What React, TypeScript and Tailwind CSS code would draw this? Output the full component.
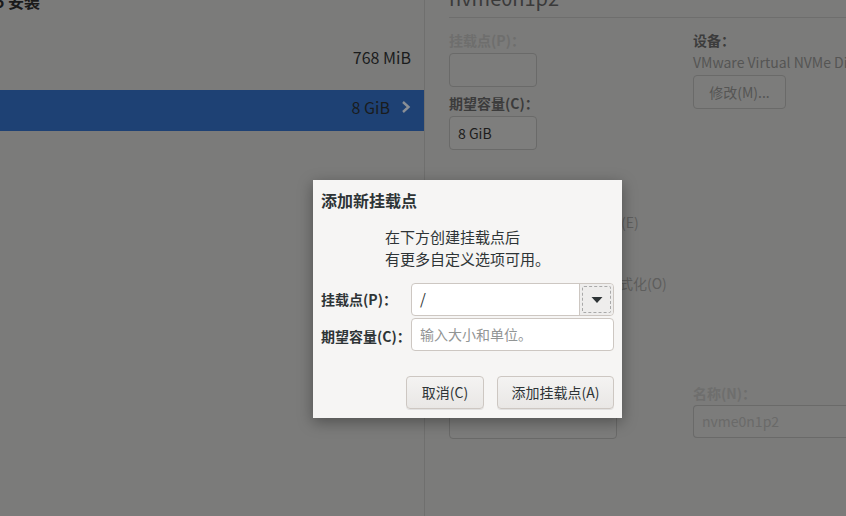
export default function App() {
  return (
    <div className="relative w-[846px] h-[516px] overflow-hidden bg-[#7b7b7a] flex font-['Noto_Sans_CJK_SC','Noto_Sans',sans-serif] text-[#1a1c1d]">
      {/* Left: partition list (dimmed) */}
      <div className="w-[425px] shrink-0 border-r border-[#6f6f6e] flex flex-col">
        <div className="-mt-[9px] -ml-[5px] text-[16px] leading-[20px] font-bold text-[#1a1a1a]">5 安装</div>
        <div className="mt-[25px] h-[41px] flex items-center justify-end pr-[13px] text-[16px]">768 MiB</div>
        <div className="mt-[13px] h-[41px] bg-[#1e4174] flex items-center justify-end pr-[12px] pb-[8px] text-[16px]">
          <span>8 GiB</span>
          <svg width="12" height="14" viewBox="0 0 12 14" className="ml-[10px]">
            <path d="M3 2 L8.5 7 L3 12" fill="none" stroke="#8a8f96" strokeWidth="2.4" />
          </svg>
        </div>
      </div>

      {/* Right: partition details (dimmed) */}
      <div className="flex-1 pl-[24px] flex flex-col">
        <div className="h-[18px] border-b border-[#6e6e6d] overflow-hidden">
          <div className="-mt-[14px] text-[20px] leading-[24px] text-[#3a3a3a]">nvme0n1p2</div>
        </div>
        <div className="flex">
          <div className="w-[244px] flex flex-col">
            <div className="mt-[13px] text-[14px] leading-[18px] font-bold text-[#6e6e6d]">挂载点(P)：</div>
            <div className="mt-[4px] w-[88px] h-[34px] rounded-[4px] border border-[#6a6a69] bg-[#7c7c7b]" />
            <div className="mt-[7px] text-[14px] leading-[18px] font-bold text-[#3c3c3c]">期望容量(C)：</div>
            <div className="mt-[4px] w-[88px] h-[34px] rounded-[4px] border border-[#6a6a69] bg-[#7e7e7d] flex items-center pl-[8px] text-[14px] text-[#1c1c1c]">8 GiB</div>
            <div className="mt-[62px] flex items-center pl-[124px] text-[14px] text-[#5e5e5d]">
              <span className="w-[14px] h-[14px] rounded-[3px] border border-[#6a6a69] mr-[6px]" />
              <span>加密(E)</span>
            </div>
            <div className="mt-[40px] flex items-center pl-[108px] text-[14px] text-[#5e5e5d]">
              <span className="w-[14px] h-[14px] rounded-[3px] border border-[#6a6a69] mr-[6px]" />
              <span>重新格式化(O)</span>
            </div>
            <div className="mt-[112px] w-[168px] h-[33px] rounded-[4px] border border-[#6a6a69] bg-[#7c7c7b]" />
          </div>
          <div className="flex-1 flex flex-col">
            <div className="mt-[13px] text-[14px] leading-[18px] font-bold text-[#3c3c3c]">设备：</div>
            <div className="mt-[4px] text-[14px] leading-[18px] whitespace-nowrap text-[#555554]">VMware Virtual NVMe Disk (nvme0n1)</div>
            <div className="mt-[4px] w-[93px] h-[34px] rounded-[4px] border border-[#6a6a69] bg-[#7c7c7b] flex items-center justify-center text-[14px] text-[#555554]">修改(M)...</div>
            <div className="mt-[275px] text-[14px] leading-[18px] font-bold text-[#6e6e6d]">名称(N)：</div>
            <div className="mt-[3px] w-[170px] h-[33px] rounded-l-[4px] border border-r-0 border-[#6a6a69] bg-[#7c7c7b] flex items-center pl-[8px] text-[14px] text-[#6a6a69]">nvme0n1p2</div>
          </div>
        </div>
      </div>

      {/* Modal dialog */}
      <div className="absolute left-[313px] top-[180px] w-[309px] h-[238px] bg-[#f6f5f4] shadow-[0_4px_14px_rgba(0,0,0,0.35)] flex flex-col text-[#2e3436]">
        <div className="mt-[10px] ml-[8px] text-[16px] leading-[20px] font-bold">添加新挂载点</div>
        <div className="mt-[16px] ml-[72px] text-[15px] leading-[22px]">
          <div>在下方创建挂载点后</div>
          <div>有更多自定义选项可用。</div>
        </div>
        <div className="mt-[13px] ml-[8px] grid grid-cols-[90px_203px] gap-y-[2px] items-center">
          <div className="text-[14px] font-bold">挂载点(P)：</div>
          <div className="h-[33px] rounded-[4px] border border-[#cdc7c2] bg-white flex">
            <div className="flex-1 flex items-center pl-[8px] text-[15px]">/</div>
            <div className="w-[34px] border-l border-[#cdc7c2] bg-[#eeedec] rounded-r-[4px] p-[2px]">
              <div className="w-full h-full border border-dashed border-[#a9a9a9] rounded-[2px] flex items-center justify-center">
                <svg width="12" height="8" viewBox="0 0 12 8">
                  <path d="M0.5 1 L11.5 1 L6 7 Z" fill="#2e3436" />
                </svg>
              </div>
            </div>
          </div>
          <div className="text-[14px] font-bold mt-[4px]">期望容量(C)：</div>
          <div className="h-[33px] rounded-[4px] border border-[#cdc7c2] bg-white flex items-center pl-[8px] text-[14px] text-[#929595]">输入大小和单位。</div>
        </div>
        <div className="mt-auto mb-[9px] mr-[8px] flex justify-end gap-[13px]">
          <button className="w-[78px] h-[33px] rounded-[4px] border border-[#cdc7c2] bg-gradient-to-b from-[#f4f3f2] to-[#e9e7e5] shadow-[0_1px_0_rgba(0,0,0,0.08)] text-[14px] text-[#2e3436]">取消(C)</button>
          <button className="w-[117px] h-[33px] rounded-[4px] border border-[#cdc7c2] bg-gradient-to-b from-[#f4f3f2] to-[#e9e7e5] shadow-[0_1px_0_rgba(0,0,0,0.08)] text-[14px] text-[#2e3436]">添加挂载点(A)</button>
        </div>
      </div>
    </div>
  );
}
